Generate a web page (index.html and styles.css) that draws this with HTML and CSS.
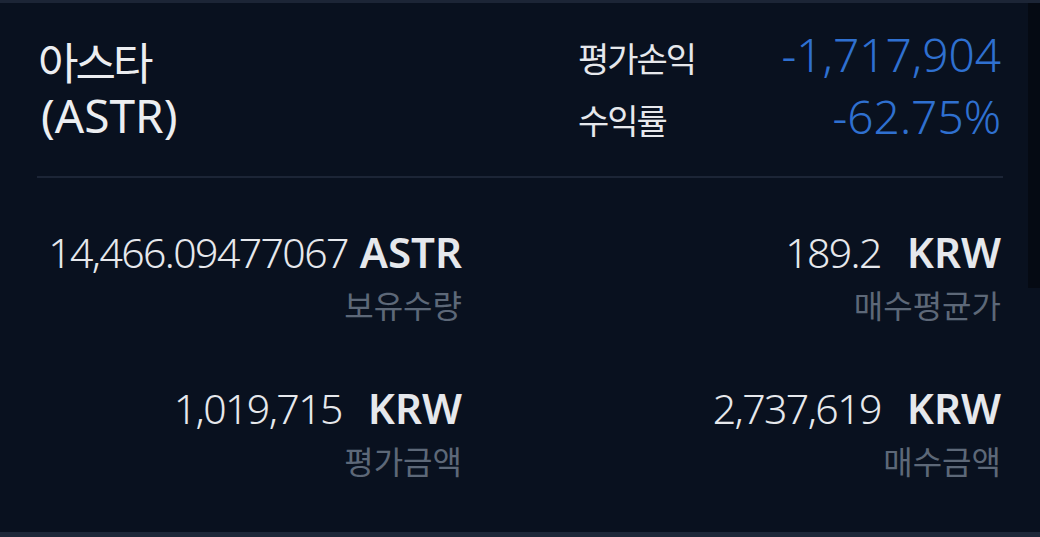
FILE: index.html
```html
<!DOCTYPE html>
<html lang="ko">
<head>
    <meta charset="UTF-8">
    <meta name="viewport" content="width=device-width, initial-scale=1.0">
    <title>아스타 보유현황</title>
    <link rel="stylesheet" href="styles.css">
</head>
<body>
    <div class="panel">
        <div class="scroll-shade"></div>

        <div class="summary">
            <div class="coin-name">
                <div class="name-ko">아스타</div>
                <div class="name-en">(ASTR)</div>
            </div>
            <div class="pnl">
                <span class="pnl-label">평가손익</span>
                <span class="pnl-value">-1,717,904</span>
                <span class="pnl-label">수익률</span>
                <span class="pnl-value">-62.75%</span>
            </div>
        </div>

        <div class="divider"></div>

        <div class="holdings">
            <div class="stat">
                <div class="stat-value">14,466.09477067<span class="unit unit-coin">ASTR</span></div>
                <div class="stat-label">보유수량</div>
            </div>
            <div class="stat">
                <div class="stat-value">189.2<span class="unit">KRW</span></div>
                <div class="stat-label">매수평균가</div>
            </div>
            <div class="stat">
                <div class="stat-value">1,019,715<span class="unit">KRW</span></div>
                <div class="stat-label">평가금액</div>
            </div>
            <div class="stat">
                <div class="stat-value">2,737,619<span class="unit">KRW</span></div>
                <div class="stat-label">매수금액</div>
            </div>
        </div>
    </div>
</body>
</html>
```

FILE: styles.css
```css
:root {
    --bg-color: #09111f;
    --edge-color: #1c2536;
    --text-color: #e6e8ec;
    --muted-color: #5d6878;
    --loss-color: #2f70d0;
}

body {
    margin: 0;
    background-color: var(--bg-color);
    color: var(--text-color);
    font-family: 'Noto Sans', 'Noto Sans CJK KR', sans-serif;
}

.panel {
    position: relative;
    height: 537px;
    box-sizing: border-box;
    border-top: 3px solid var(--edge-color);
    border-bottom: 5px solid #1e2839;
    overflow: hidden;
}

/* dark scroll track along the right edge */
.scroll-shade {
    position: absolute;
    top: 0;
    right: 0;
    width: 12px;
    height: 285px;
    background: #050a13;
}

.summary {
    display: flex;
    justify-content: space-between;
    align-items: flex-start;
    padding: 23px 39px 0 38px;
}

.coin-name {
    margin-top: 11px;
    font-size: 44px;
    line-height: 52px;
    color: #eceef1;
}

.name-ko {
    letter-spacing: -3px;
}

.name-en {
    margin-left: 3px;
    font-size: 46px;
}

.pnl {
    display: grid;
    grid-template-columns: auto auto;
    column-gap: 40px;
    align-items: baseline;
    width: 423px;
    justify-content: space-between;
}

.pnl-label {
    font-size: 34px;
    line-height: 57px;
    letter-spacing: -2px;
}

.pnl-value {
    font-size: 46px;
    line-height: 57px;
    font-weight: 300;
    color: var(--loss-color);
    text-align: right;
}

.divider {
    height: 2px;
    margin: 26px 37px 0 37px;
    background: var(--edge-color);
}

.holdings {
    display: grid;
    grid-template-columns: 1fr 1fr;
    column-gap: 115px;
    row-gap: 58px;
    padding: 50px 39px 0 38px;
}

.stat {
    text-align: right;
}

.stat-value {
    font-size: 41px;
    line-height: 48px;
    font-weight: 300;
    letter-spacing: -1.6px;
}

.unit {
    font-size: 42px;
    font-weight: 600;
    letter-spacing: 0;
    margin-left: 26px;
}

.unit-coin {
    margin-left: 12px;
}

.stat-label {
    margin-top: 10px;
    font-size: 32px;
    line-height: 40px;
    color: var(--muted-color);
}
```
